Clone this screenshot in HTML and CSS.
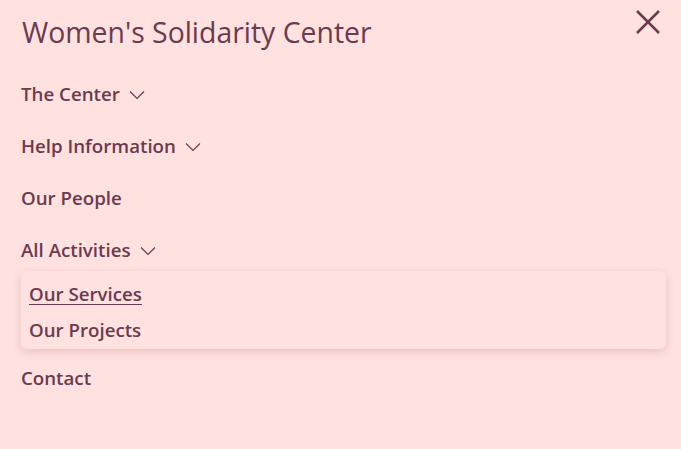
FILE: index.html
```html
<!DOCTYPE html>
<html lang="en">
<head>
<meta charset="utf-8">
<title>Women's Solidarity Center</title>
<link rel="stylesheet" href="styles.css">
</head>
<body>
<div class="panel">
  <header class="head">
    <h1 class="title">Women's Solidarity Center</h1>
    <button class="close" aria-label="Close">
      <svg width="24" height="24" viewBox="0 0 24 24"><path d="M1 1L23 23M23 1L1 23" stroke="#6b3a4f" stroke-width="2.5" fill="none"/></svg>
    </button>
  </header>
  <nav class="nav">
    <div class="item"><span>The Center</span><svg class="chev" width="16" height="10" viewBox="0 0 16 10"><path d="M1 1.5L8 8.5L15 1.5" stroke="#6b3a4f" stroke-width="1.2" fill="none"/></svg></div>
    <div class="item"><span>Help Information</span><svg class="chev" width="16" height="10" viewBox="0 0 16 10"><path d="M1 1.5L8 8.5L15 1.5" stroke="#6b3a4f" stroke-width="1.2" fill="none"/></svg></div>
    <div class="item"><span>Our People</span></div>
    <div class="item"><span>All Activities</span><svg class="chev" width="16" height="10" viewBox="0 0 16 10"><path d="M1 1.5L8 8.5L15 1.5" stroke="#6b3a4f" stroke-width="1.2" fill="none"/></svg></div>
    <div class="sub">
      <a class="subitem active" href="#">Our Services</a>
      <a class="subitem" href="#">Our Projects</a>
    </div>
    <div class="item"><span>Contact</span></div>
  </nav>
</div>
</body>
</html>
```
FILE: styles.css
```css
html, body {
  margin: 0;
  padding: 0;
  background: #ffe1df;
}
body {
  font-family: "Open Sans", "Noto Sans", sans-serif;
  color: #6b3a4f;
  width: 681px;
  height: 449px;
  overflow: hidden;
}
.panel {
  padding: 0 15px 0 21px;
}
.head {
  display: flex;
  justify-content: space-between;
  align-items: flex-start;
  height: 67px;
}
.title {
  margin: 14px 0 0 1px;
  font-size: 28.4px;
  font-weight: 400;
  line-height: 36px;
  letter-spacing: 0;
}
.close {
  background: none;
  border: 0;
  padding: 0;
  margin: 10px 6px 0 0;
  width: 24px;
  height: 24px;
  cursor: pointer;
}
.close svg { display: block; }
.nav {
  display: flex;
  flex-direction: column;
}
.item {
  display: flex;
  align-items: center;
  gap: 9px;
  height: 52px;
  font-size: 18.7px;
  font-weight: 600;
}
.chev { margin-top: 3px; }
.sub {
  display: flex;
  flex-direction: column;
  margin: -4px 0 2px;
  padding: 4px 8px 2px;
  background: #ffe1df;
  border-radius: 6px;
  box-shadow: 0 3px 8px rgba(120, 60, 60, 0.18);
}
.subitem {
  height: 36px;
  display: flex;
  align-items: center;
  font-size: 18.7px;
  font-weight: 600;
  color: #6b3a4f;
  text-decoration: none;
}
.subitem.active {
  text-decoration: underline;
  text-underline-offset: 3px;
}
```
